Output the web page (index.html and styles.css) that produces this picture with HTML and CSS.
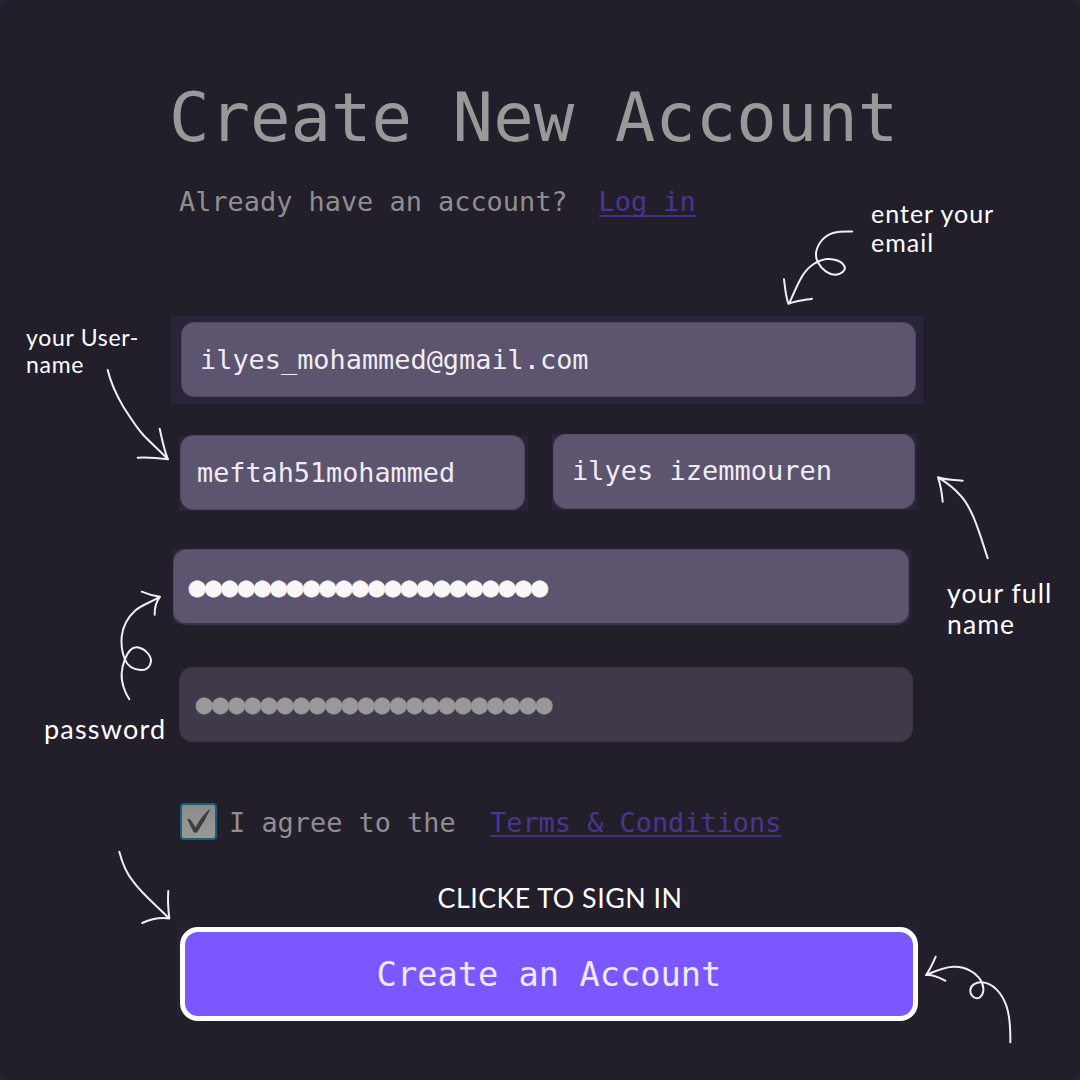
FILE: index.html
```
<!DOCTYPE html>
<html lang="en">
<head>
<meta charset="utf-8">
<title>Create New Account</title>
<link rel="stylesheet" href="styles.css">
</head>
<body>
<main class="card">
  <form class="form">
    <h1 class="title">Create New Account</h1>
    <p class="subtitle">Already have an account? <a class="link link-login">Log in</a></p>

    <div class="frame frame-email"><div class="field">ilyes_mohammed@gmail.com</div></div>

    <div class="row">
      <div class="frame frame-user"><div class="field">meftah51mohammed</div></div>
      <div class="frame frame-name"><div class="field">ilyes izemmouren</div></div>
    </div>

    <div class="frame frame-password"><div class="field">●●●●●●●●●●●●●●●●●●●●●●</div></div>
    <div class="field field-confirm">●●●●●●●●●●●●●●●●●●●●●●</div>

    <div class="agree">
      <span class="checkbox">
        <svg width="24" height="26" viewBox="0 0 24 26"><path d="M.3 10.8Q2.500 10 4.500 13L8.500 19.300Q15 7 23.800.3Q18.500 12 11 23Q8.500 26.500 6.300 23.500Q2.500 17 .3 10.800Z" fill="#3e3e3e"/></svg>
      </span>
      <span class="agree-text">I agree to the</span>
      <a class="link link-terms">Terms &amp; Conditions</a>
    </div>

    <p class="hint">CLICKE TO SIGN IN</p>
    <div class="frame-button"><button class="button" type="button">Create an Account</button></div>
  </form>

  <svg class="arrows" width="1080" height="1080" viewBox="0 0 1080 1080">
    <path d="M852.200 231.500C838 231 828 232 820.500 242C815 250 814.500 256 818 262.500C822 270 829 274.700 835 274.700C842 274.500 846 270 844.500 266.500C842 261 834 258.500 827 259C818 260 808 266 801.700 277C797 285 793 295 789.300 303.300M784 279.300C785 288 786 298 788.500 303.800C796 301 805 300 812 298.700"/>
    <path d="M107.700 370C111 384 117 396 123.300 406.700C130 417 136 427 143.300 435C151 443 160 451 168 459.300M159.700 428.700C162 439 164 450 168 459.300C158 458 148 457.200 137.700 457.700"/>
    <path d="M987.700 558.300C983 544 979 530 973.300 516.700C969 507 965 500 960 495C953 487 946 482 938 477.300M962.700 480.700C954 480 946 480 938 477.300C941 486 942 494 942.700 501.700"/>
    <path d="M129.300 699.300C125 693 121 682 121.700 673.300C122 667 123 664 124.700 660C128 651 132 647 137 647.300C144 648 151 655 151 661C150.500 667 146 670.500 140.700 670C132 669.500 127 665 124.700 659C122 652 121 644 121.700 636.700C123 625 127 618 135 610.700C143 604 152 602 160 596.700M141.700 591.700C147 594 153 596 160 596.700C156 602 154.500 608 154.700 614.700"/>
    <path d="M119.300 851.700C122 862 126 873 133.300 881.700C143 895 157 906 169 918.500M168.300 891C167.500 901 168.300 910 169.300 918.500C159 917 151 919 142.300 923"/>
    <path d="M1010.300 1042.300C1010.500 1029 1010 1017 1006.700 1006.700C1002 993 993 983 981.700 982.300C976 982 971 985 970.300 990C970 994 973 998.500 977 998.300C981 998 984 993 983.300 988.300C983 981 977 974 970 970.700C965 967.500 960 966.500 953.300 966.700C944 967 935 971 926 975M935.700 956.700C933 963 930 970 926 975C934 974 940 978 945.300 980.700"/>
  </svg>

  <p class="note note-email">enter your<br>email</p>
  <p class="note note-user">your User-<br>name</p>
  <p class="note note-name">your full<br>name</p>
  <p class="note note-password">password</p>
</main>
</body>
</html>
```
FILE: styles.css
```
* { box-sizing: border-box; }

body {
  margin: 0;
  background: #292439;
}

h1, p { margin: 0; }

.card {
  position: relative;
  width: 1080px;
  height: 1080px;
  overflow: hidden;
  border-radius: 11px;
  background: #231f2a;
  font-family: "DejaVu Sans Mono", monospace;
  font-size: 26.900px;
}

.form {
  display: flex;
  flex-direction: column;
  align-items: flex-start;
  padding: 78px 0 0 171px;
}

.title {
  margin-left: -2px;
  font-size: 67.300px;
  font-weight: 400;
  line-height: 80px;
  color: #999;
  white-space: nowrap;
}

.subtitle {
  display: flex;
  gap: 31px;
  margin: 26px 0 0 8px;
  line-height: 36px;
  color: #8f8e90;
  white-space: nowrap;
}

.link {
  height: 33px;
  color: #493692;
  border-bottom: 2px solid #423080;
}

.frame { background: #292439; }

.field {
  height: 75px;
  padding-left: 18px;
  border: 1px solid #504861;
  border-radius: 13px;
  background: #5d5470;
  color: #f0edf0;
  line-height: 74px;
  white-space: nowrap;
}

.frame-email {
  width: 752px;
  height: 88px;
  margin-top: 96px;
  padding: 6px 7px 0 10px;
}

.row {
  display: flex;
  gap: 24px;
  margin: 30px 0 0 8px;
}

.frame-user {
  width: 349px;
  height: 75px;
  margin-top: 2px;
  padding: 0 3px 0 1px;
}

.frame-user .field {
  margin-top: -1px;
  padding-left: 16px;
  font-size: 26.800px;
}

.frame-name {
  width: 365px;
  height: 76px;
  padding: 0 2px 0 1px;
}

.frame-name .field {
  border-top: 0;
  font-size: 27px;
}

.frame-password {
  width: 738px;
  height: 74px;
  margin: 38px 0 0 2px;
  padding-right: 2px;
}

.frame-password .field {
  height: 76px;
  padding-left: 15px;
  border-bottom: 2px solid #3c3649;
  color: #f9f7f7;
  font-size: 27.100px;
  -webkit-text-stroke: .7px #f9f7f7;
}

.field-confirm {
  width: 734px;
  margin: 44px 0 0 8px;
  padding-left: 16px;
  border-color: #393343;
  background: #3f394a;
  color: #999;
  line-height: 71px;
  -webkit-text-stroke: .7px #999;
}

.agree {
  display: flex;
  align-items: center;
  height: 38px;
  margin: 60px 0 0 9px;
  color: #8f8e90;
  line-height: 36px;
  white-space: nowrap;
}

.checkbox {
  display: flex;
  align-items: center;
  justify-content: center;
  width: 37px;
  height: 37px;
  border: 2px solid #146278;
  border-radius: 4px;
  background: linear-gradient(#8b8b8b, #999);
}

.agree-text {
  width: 261px;
  margin-left: 12px;
  padding-top: 3px;
}

.link-terms {
  height: 32px;
}

.hint {
  width: 752px;
  margin-top: 41px;
  padding-left: 26px;
  font-family: Lato, sans-serif;
  font-size: 26.800px;
  letter-spacing: .5px;
  line-height: 34px;
  text-align: center;
  color: #fff;
}

.frame-button {
  width: 740px;
  height: 89px;
  margin: 12px 0 0 6px;
  padding-left: 3px;
  background: #272235;
}

.button {
  display: block;
  width: 738px;
  height: 94px;
  padding: 0;
  border: 5px solid #fff;
  border-radius: 18px;
  background: #7b57ff;
  color: #eeeaf8;
  font-family: inherit;
  font-size: 33.700px;
}

/* Hand-drawn callouts that lie over the form */
.arrows {
  position: absolute;
  inset: 0;
  fill: none;
  stroke: #f1eff2;
  stroke-width: 2;
  stroke-linecap: round;
  stroke-linejoin: round;
}

.note {
  position: absolute;
  color: #fff;
  font-family: Lato, sans-serif;
  white-space: nowrap;
}

.note-email { left: 871px; top: 199px; font-size: 25px; line-height: 29.300px; letter-spacing: 1px; }
.note-user { left: 26px; top: 324px; font-size: 23px; line-height: 26.700px; letter-spacing: .7px; }
.note-name { left: 947px; top: 578px; font-size: 26.500px; line-height: 30.700px; letter-spacing: 1.100px; }
.note-password { left: 44px; top: 713px; font-size: 27px; line-height: 32px; letter-spacing: 1.200px; }
```
